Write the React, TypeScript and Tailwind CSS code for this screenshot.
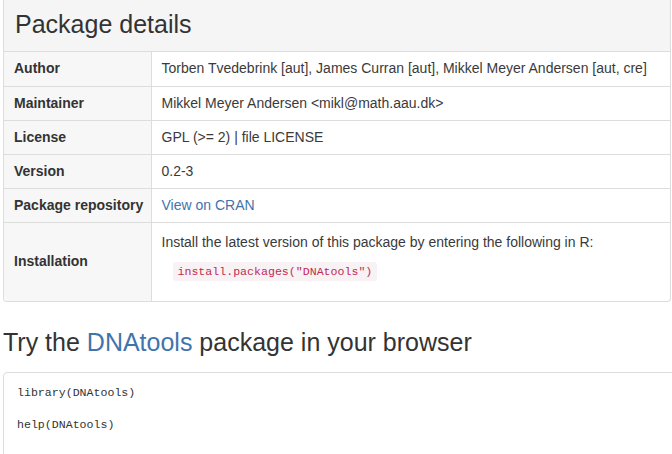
const rows: { label: string; value: React.ReactNode }[] = [
	{ label: 'Author', value: 'Torben Tvedebrink [aut], James Curran [aut], Mikkel Meyer Andersen [aut, cre]' },
	{ label: 'Maintainer', value: 'Mikkel Meyer Andersen <mikl@math.aau.dk>' },
	{ label: 'License', value: 'GPL (>= 2) | file LICENSE' },
	{ label: 'Version', value: '0.2-3' },
	{ label: 'Package repository', value: <a className="text-[#3f74ad]">View on CRAN</a> },
];

export default function App() {
	return (
		<div className="w-[672px] h-[454px] overflow-hidden bg-white text-[#333] font-['Liberation_Sans',Arial,sans-serif] text-[14px]">
			<div className="ml-[3px] mr-[1px] border border-t-0 border-[#ddd] rounded-b-[4px] overflow-hidden">
				<div className="h-[52px] bg-[#f5f5f5] border-b border-[#ddd] px-[11px] flex items-center text-[25px] leading-none pb-[2px]">
					Package details
				</div>
				<table className="w-full border-collapse table-fixed">
					<colgroup>
						<col className="w-[147px]" />
						<col />
					</colgroup>
					<tbody>
						{rows.map((r) => (
							<tr key={r.label} className="h-[34px] border-b border-[#ddd]">
								<th className="bg-[#f7f7f7] border-r border-[#ddd] text-left font-bold px-[10px] py-0 whitespace-nowrap">
									{r.label}
								</th>
								<td className="px-[10px] py-0 whitespace-nowrap text-[#3a3a3a]">{r.value}</td>
							</tr>
						))}
						<tr className="h-[79px]">
							<th className="bg-[#f7f7f7] border-r border-[#ddd] text-left font-bold px-[10px] py-0">
								Installation
							</th>
							<td className="px-[10px] pt-[9px] pb-[18px] align-top text-[#3a3a3a]">
								<p>Install the latest version of this package by entering the following in R:</p>
								<code className="inline-block mt-[9px] ml-[11px] px-[5px] py-[1px] bg-[#f9f2f4] text-[#c02a55] rounded-[3px] font-['Liberation_Mono',monospace] text-[11.6px]">
									install.packages("DNAtools")
								</code>
							</td>
						</tr>
					</tbody>
				</table>
			</div>
			<h2 className="mt-[28px] ml-[3px] text-[25px] leading-none">
				Try the <a className="text-[#3f74ad]">DNAtools</a> package in your browser
			</h2>
			<pre className="mt-[17px] ml-[3px] -mr-[10px] h-[120px] border border-[#ddd] rounded-[4px] bg-white px-[13px] pt-[12px] font-['Liberation_Mono',monospace] text-[11.6px] leading-[16px] text-[#333]">
				{'library(DNAtools)\n\nhelp(DNAtools)'}
			</pre>
		</div>
	);
}
